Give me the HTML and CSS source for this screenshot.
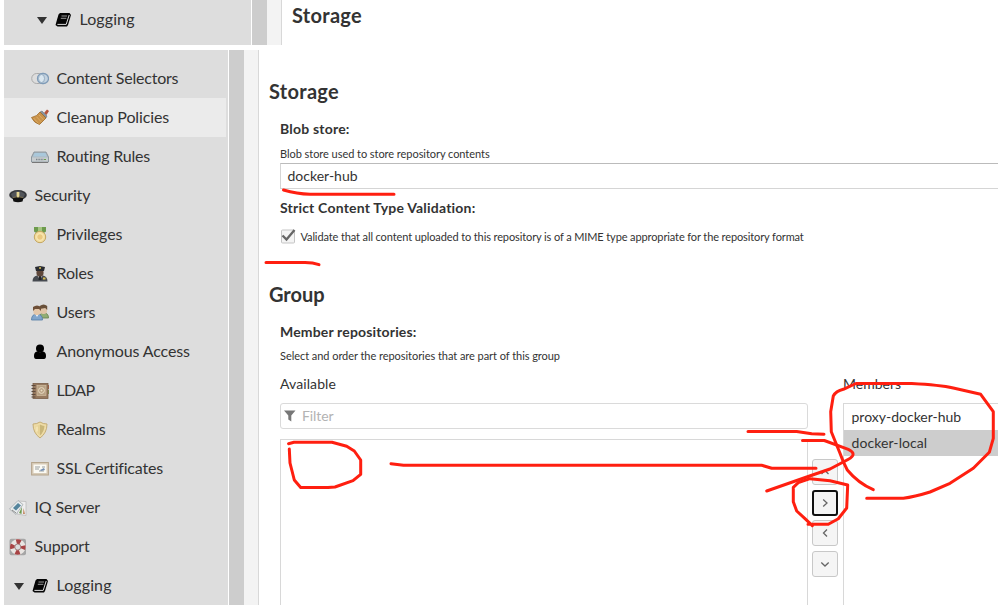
FILE: index.html
```html
<!DOCTYPE html>
<html lang="en">
<head>
<meta charset="utf-8">
<title>Repository settings</title>
<link rel="stylesheet" href="styles.css">
</head>
<body>
<svg class="defs" width="0" height="0">
  <defs>
    <symbol id="book" viewBox="0 0 18 18"><path d="M6 2h9.500l1.500 2-3 10-1 1.500H3.500L1.500 14 4.500 3.500z" fill="#050505"/><path d="M7.500 5h5.500M6.800 7.300h5.500" stroke="#aaa" stroke-width=".9"/><path d="M3.400 13.400h8.800l3-9.400" stroke="#ddd" fill="none"/></symbol>
    <symbol id="caret" viewBox="0 0 10 7"><path d="M0 0h10L5 7z" fill="#333"/></symbol>
  </defs>
</svg>

<div class="top">
  <nav class="side side-wide"><div class="row sub top-row"><svg class="caret"><use href="#caret"/></svg><svg class="icon"><use href="#book"/></svg><span class="s-log">Logging</span></div></nav>
  <div class="scroll"></div><div class="gutter"></div>
  <div class="top-main"><h2 class="b-storage">Storage</h2></div>
</div>

<div class="bottom">
  <nav class="side">
    <div class="row sub"><svg class="icon" viewBox="0 0 18 18"><rect x=".7" y="3.500" width="13" height="10" rx="5" fill="#ddd" stroke="#aaa"/><rect x="6.500" y="3.500" width="11" height="10" rx="5" fill="#b8cde0" fill-opacity=".7" stroke="#7f9bb7" stroke-width="1.300"/><ellipse cx="10.500" cy="8.500" rx="3" ry="4" fill="#d9e6ef" stroke="#8ba5bd" stroke-width=".8"/></svg><span class="s-content">Content Selectors</span></div>
    <div class="row sub on"><svg class="icon" viewBox="0 0 18 18"><path d="M13 4l3-3.500 2 1.500-2.500 4z" fill="#b5533a"/><path d="M9 3l2-1 5 5-1 2z" fill="#87939e" stroke="#6b7781" stroke-width=".6"/><path d="M9 3l6 6-6.500 6.500Q3 14 .5 8.500 6 7.500 9 3z" fill="#c9924a" stroke="#9c6826" stroke-width=".8"/><path d="M2.500 9l5 5.500M5.500 7.800l5 5.200M8 6l4.500 4.800" stroke="#e3b970" stroke-width=".7"/></svg><span class="s-clean">Cleanup Policies</span></div>
    <div class="row sub"><svg class="icon" viewBox="0 0 18 18"><path d="M3 4h12l2.500 5v5H.5V9z" fill="#aeb9c1" stroke="#7e8a93" stroke-width=".8"/><path d="M3.700 5h10.600l1.700 3.500H2z" fill="#a9c8db"/><path d="M1 9.500h16v4H1z" fill="#c7cccf"/><path d="M5 11.500h8" stroke="#7b858b" stroke-width="1.500" stroke-dasharray="1 .6"/><path d="M13 11.500h2" stroke="#65a14c"/><path d="M1 14.500h16" stroke="#777"/></svg><span class="s-routing">Routing Rules</span></div>
    <div class="row"><svg class="icon" viewBox="0 0 18 18"><ellipse cx="9" cy="8" rx="8.800" ry="5" fill="#34363a"/><path d="M2 7q7-6 14 0l-2 5H4z" fill="#52555a"/><path d="M3.500 11q5.500-2 11 0l-1 3.500q-4.500 1.500-9 0z" fill="#111"/><path d="M4 10.500q5-1.600 10 0" fill="none" stroke="#8a7a4c" stroke-width=".8"/><path d="M7.600 5h2.800v4L9 11 7.600 9z" fill="#e5d692"/></svg><span class="s-security">Security</span></div>
    <div class="row sub"><svg class="icon" viewBox="0 0 18 18"><path d="M3 1h12v4.500l-3 2H6l-3-2z" fill="#6d9b4d"/><path d="M7 1h4v5H7z" fill="#a6c681"/><circle cx="9" cy="11" r="5.700" fill="#f2dda0" stroke="#c4a661"/><circle cx="9" cy="11" r="3.300" fill="#eac981" stroke="#fff0be" stroke-width=".8"/></svg><span class="s-priv">Privileges</span></div>
    <div class="row sub"><svg class="icon" viewBox="0 0 18 18"><path d="M1.500 16.500q0-5 4.500-6h6q4.500 1 4.500 6z" fill="#464a50"/><path d="M6 10l3 5 3-5z" fill="#ccc"/><path d="M8 10h2l.6 5H7.500z" fill="#25272a"/><rect x="5.500" y="4" width="7" height="7.500" rx="3.300" fill="#5f483b"/><path d="M4 2l5-1 5 1-1 4H5z" fill="#292b30"/><path d="M8.300 2h1.500v2H8.300zM12 12.500h2.500v2H12z" fill="#d5bd52"/></svg><span class="s-roles">Roles</span></div>
    <div class="row sub"><svg class="icon" viewBox="0 0 18 18"><path d="M8 14q0-5 5-5 4.500 0 4.500 5z" fill="#91ad74" stroke="#66824d" stroke-width=".8"/><rect x="9" y="2" width="7" height="8" rx="3" fill="#dfc4a8"/><path d="M8.700 5V2q4-3 7.500 0v4l-2-2z" fill="#685039"/><path d="M.5 16q0-6 5.500-6t5.500 6z" fill="#81a5cb" stroke="#527ba6" stroke-width=".8"/><path d="M4.500 10h3L6 13z" fill="#fff"/><rect x="2.500" y="3.500" width="7" height="7.500" rx="3" fill="#e4c7aa"/><path d="M2 7V3q4-3 8 0v4L8 5H4z" fill="#6e4f37"/></svg><span class="s-users">Users</span></div>
    <div class="row sub"><svg class="icon" viewBox="0 0 18 18"><circle cx="9" cy="5.500" r="4" fill="#000"/><path d="M3 13q0-4.500 3.500-4.500 2.500 1.500 5 0Q15 8.500 15 13q0 3-2 3H5q-2 0-2-3z" fill="#000"/></svg><span class="s-anon">Anonymous Access</span></div>
    <div class="row sub"><svg class="icon" viewBox="0 0 18 18"><path d="M16 3h2v4h-2z" fill="#a85e45"/><path d="M16 8h2v4h-2z" fill="#829958"/><rect x="2" y="1.500" width="15" height="15" fill="#96795f" stroke="#7a5f48" stroke-width=".8"/><rect x="6" y="3.500" width="9" height="10" fill="#b7a083" stroke="#d1bea1" stroke-width=".7"/><circle cx="10.500" cy="8.500" r="2.900" fill="none" stroke="#eadcc3"/><circle cx="10.500" cy="8.500" r="1" fill="#eadcc3"/><path d="M.5 3.500h4M.5 6.500h4M.5 9.500h4M.5 12.500h4M.5 15h4" stroke="#5d4b3e"/></svg><span class="s-ldap">LDAP</span></div>
    <div class="row sub"><svg class="icon" viewBox="0 0 18 18"><path d="M9 1q3 2 7 2 0 9-7 14Q2 12 2 3q4 0 7-2z" fill="#eedca7" stroke="#c5ad75"/><path d="M9 3.500q2 1.200 4.500 1.500Q13 11 9 14.500z" fill="#c9b67a"/><path d="M9 3.500Q7 4.700 4.500 5 5 11 9 14.500z" fill="#e6d297"/><path d="M6 5.500v5" stroke="#fff4cd"/></svg><span class="s-realms">Realms</span></div>
    <div class="row sub"><svg class="icon" viewBox="0 0 18 18"><rect x=".6" y="2.500" width="16.800" height="12.500" fill="#d7cbb7" stroke="#b5a58d"/><rect x="2.500" y="4.500" width="13" height="8.500" fill="#fbfaf4"/><path d="M4 7h5M4 9h4M11 7h3M8 11h5" stroke="#9a9fa0"/><path d="M9 10l4-2 1 2-4 1z" fill="#738eb3"/></svg><span class="s-ssl">SSL Certificates</span></div>
    <div class="row"><svg class="icon" viewBox="0 0 18 18"><path d="M9 2l8 .5v14L8 15z" fill="#eee" stroke="#bbb" stroke-width=".8"/><path d="M.5 10L9 1.500l5 4-7 10z" fill="#e8eced" stroke="#a4aaad" stroke-width=".8"/><path d="M4 9l5-5 3 2.500-5 5z" fill="#55859d"/><path d="M10 14l3-6-.5 7z" fill="#6a9a4e"/><path d="M14.500 9l1.500 6h-2z" fill="#c38b67"/><path d="M3 11l4 3" stroke="#888"/></svg><span class="s-iq">IQ Server</span></div>
    <div class="row"><svg class="icon" viewBox="0 0 18 18"><rect x=".5" y=".8" width="16.500" height="16.500" rx="2" fill="#a6a6a6"/><circle cx="8.800" cy="9" r="5.500" fill="none" stroke="#e9e5e2" stroke-width="4.600"/><circle cx="8.800" cy="9" r="5.500" fill="none" stroke="#a84344" stroke-width="4.600" stroke-dasharray="4.320 4.320" stroke-dashoffset="2.160"/><circle cx="8.800" cy="9" r="3" fill="#dcdcdc" stroke="#8d5959" stroke-width=".6"/></svg><span class="s-support">Support</span></div>
    <div class="row sub"><svg class="caret"><use href="#caret"/></svg><svg class="icon"><use href="#book"/></svg><span class="s-log">Logging</span></div>
  </nav>
  <div class="scroll"></div><div class="gutter"></div>
  <main>
    <section>
      <h2 class="b-storage">Storage</h2>
      <div class="fields">
        <h3>Blob store:</h3>
        <p class="help">Blob store used to store repository contents</p>
        <div class="select"><span>docker-hub</span></div>
        <h3 class="strict">Strict Content Type Validation:</h3>
        <label class="check"><svg width="17" height="17" viewBox="0 0 17 17"><rect x="1.500" y="2" width="13" height="13" rx="1" fill="#f4f4f4" stroke="#c5c5c5"/><path d="M2.500 7.500l4 4L14.500 2" fill="none" stroke="#666" stroke-width="2.300"/></svg><span>Validate that all content uploaded to this repository is of a MIME type appropriate for the repository format</span></label>
      </div>
    </section>
    <section class="group">
      <h2>Group</h2>
      <div class="fields">
        <h3 class="b-member">Member repositories:</h3>
        <p class="help">Select and order the repositories that are part of this group</p>
        <div class="picker">
          <div class="available">
            <div class="caption"><span class="v-avail">Available</span></div>
            <div class="filter"><svg width="12" height="12" viewBox="0 0 12 12"><path d="M0 .5h11.500L7.300 5.500v6l-3-2v-4z" fill="#777"/></svg><span>Filter</span></div>
            <div class="list"></div>
          </div>
          <div class="buttons">
            <span class="btn"><svg viewBox="0 0 10 10"><path d="M1.500 7L5 3.500 8.500 7"/></svg></span>
            <span class="btn focus"><svg viewBox="0 0 10 10"><path d="M3.200 1.500L7 5 3.200 8.500"/></svg></span>
            <span class="btn"><svg viewBox="0 0 10 10"><path d="M7 1.500L3.500 5 7 8.500"/></svg></span>
            <span class="btn"><svg viewBox="0 0 10 10"><path d="M1.300 3.500L5 7l3.700-3.500"/></svg></span>
          </div>
          <div class="members">
            <div class="caption"><span>Members</span></div>
            <div class="member-list"><div class="item"><span>proxy-docker-hub</span></div><div class="item picked"><span class="v-local">docker-local</span></div></div>
          </div>
        </div>
      </div>
    </section>
  </main>
</div>

<svg class="ink" width="998" height="605" viewBox="0 0 998 605">
  <path d="M283.500 190Q297 194 310 194.300H394"/>
  <path d="M266 262.500H305Q313 262.500 319 264.700"/>
  <path d="M288.500 443.700L294 442.300H332L346.700 446.300 354.300 451 360.700 460V474.300L353 480.700 335 487 328 487.500H300.700L294.300 480 290 463 289.300 449"/>
  <path d="M391 463.700L403.500 465.300H761.700L771.700 468.300H816"/>
  <path d="M748 431.500H796.700L811.700 433.700 824 434.300"/>
  <path d="M802.500 440.500H824.300L848.300 449.300Q858 454 848 459.500L830 469 806.700 477 766.700 491"/>
  <path d="M808 524.300H828.300L838.300 518.700 846.700 508 847.700 485 830 480.700 810 478.700 798.300 482.700 793.300 487.300V501.700L796.700 511 805 518.700 812.300 525.700"/>
  <path d="M873.300 489.700Q858 483 847.300 470 843 462 840 453.300L831.300 431.700 830.700 411.700 833.300 396Q836 391 843.300 389.300L856 383.500H911.700Q940 385 953.300 388L980.700 394.300 993.300 411.700V438.300L989.300 452.300 973.300 468.300 950 483.300 930 492Q914 497 903.300 498.300H866.700"/>
</svg>
</body>
</html>
```

FILE: styles.css
```css
* { box-sizing: border-box; }
body { margin: 0; width: 998px; height: 605px; overflow: hidden; background: #fff; color: #333; font-family: Lato, "Liberation Sans", sans-serif; }
.defs { position: absolute; }
h2, h3, p { margin: 0; }
h2 { font-size: 20px; line-height: 24px; font-weight: 700; }
h3 { font-size: 14px; line-height: 18px; font-weight: 700; letter-spacing: .2px; }
.b-storage { letter-spacing: .3px; }
h3.b-member { letter-spacing: .16px; }

.top, .bottom { display: flex; padding-left: 4px; }
.top { height: 45px; margin-bottom: 5px; }
.bottom { height: 555px; }
.side { flex: none; width: 224px; padding-top: 9px; background: #ddd; }
.side-wide { width: 247px; padding-top: 0; }
.scroll { flex: none; width: 16px; background: #cdcdcd; border-left: 1px solid #fff; }
.gutter { flex: none; width: 15px; background: #f3f3f3; border-right: 1px solid #d8d8d8; }
.top-main { padding: 3px 0 0 10px; }

.row { display: flex; align-items: center; height: 39px; width: 222px; padding-left: 5px; font-size: 16px; letter-spacing: -.12px; white-space: nowrap; }
.row span { padding-bottom: 2px; }
.row.sub { padding-left: 27px; }
.row.on { background: #ebebeb; }
.row .icon { flex: none; width: 18px; height: 18px; margin-right: 7.500px; }
.row .caret { flex: none; width: 10px; height: 7px; margin: 1px 7px 0 -17px; }
.row.top-row { padding-left: 50px; }
.row .s-content { letter-spacing: -.23px; }
.row .s-routing { letter-spacing: -.21px; }
.row .s-security { letter-spacing: -.2px; }
.row .s-ldap { letter-spacing: -.6px; }
.row .s-ssl { letter-spacing: -.2px; }
.row .s-log { letter-spacing: .1px; }

main { flex: 1; min-width: 0; padding: 29px 0 0 10px; }
.fields { padding-left: 11px; }
.fields h3 { margin-top: 17px; white-space: nowrap; }
.help { font-size: 11px; line-height: 14px; margin-top: 9px; letter-spacing: -.05px; white-space: nowrap; }
.select { height: 26px; margin-top: 2px; border: 1px solid #d5d5d5; border-top-color: #bbb; border-right: 0; padding-left: 6.500px; font-size: 14px; line-height: 23px; }
.fields .strict { margin-top: 10px; }
.check { display: flex; align-items: center; height: 17px; margin-top: 11px; gap: 3.500px; font-size: 11px; letter-spacing: -.115px; white-space: nowrap; }
.group { margin-top: 37px; }
.group h3 { margin-top: 17px; }
.group .help { margin-top: 8px; }
.picker { display: flex; height: 242px; }
.available { width: 528px; flex: none; display: flex; flex-direction: column; }
.caption { height: 40px; padding-top: 12px; line-height: 18px; font-size: 14px; flex: none; }
.v-avail { letter-spacing: .1px; }
.filter { display: flex; align-items: center; gap: 6px; flex: none; height: 26px; padding: 0 0 1px 3px; border: 1px solid #dadada; border-radius: 3px; font-size: 14px; letter-spacing: -.1px; color: #b3b3b3; }
.list { flex: 1; margin-top: 10px; border: 1px solid #d8d8d8; border-bottom: 0; }
.buttons { width: 35px; flex: none; display: flex; flex-direction: column; align-items: flex-start; gap: 4.670px; padding: 96px 0 0 4px; }
.btn { display: flex; align-items: center; justify-content: center; width: 26px; height: 26px; background: #f5f5f5; border: 1px solid #c8c8c8; border-radius: 3px; }
.btn.focus { border: 2px solid #111; }
.btn svg { width: 10px; height: 10px; fill: none; stroke: #666; stroke-width: 1.3; }
.members { flex: 1; display: flex; flex-direction: column; }
.member-list { flex: 1; border: 1px solid #d8d8d8; border-right: 0; border-bottom: 0; }
.item { height: 26px; padding-left: 7.500px; font-size: 14px; line-height: 26px; }
.v-local { letter-spacing: .08px; }
.picked { background: #cdcdcd; }

.ink { position: absolute; left: 0; top: 0; fill: none; stroke: #ff1f10; stroke-width: 3; stroke-linecap: round; stroke-linejoin: round; }
```
